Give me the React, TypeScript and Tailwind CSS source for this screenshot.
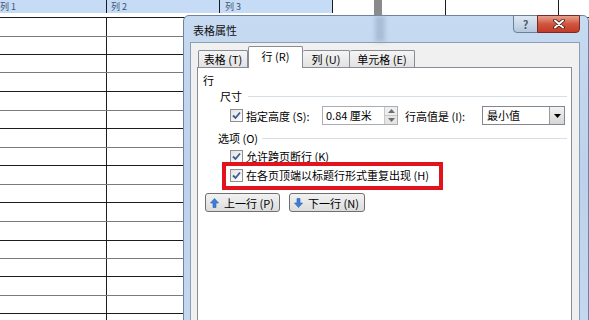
const font = { fontFamily: '"Noto Sans CJK SC", "Noto Sans", sans-serif' }

function Check() {
  return (
    <span className="flex h-[13px] w-[13px] shrink-0 items-center justify-center border border-[#8e8f8f] bg-gradient-to-br from-[#e2e2e2] to-white">
      <svg width="11" height="11" viewBox="0 0 11 11">
        <path d="M2 5.5 L4.5 8 L9 2.5" fill="none" stroke="#3b5a96" strokeWidth="1.8" />
      </svg>
    </span>
  )
}

function Arrow({ down }: { down?: boolean }) {
  return (
    <svg width="9" height="10" viewBox="0 0 9 10" className="shrink-0">
      <g transform={down ? 'rotate(180 4.5 5)' : undefined}>
        <path d="M4.5 0.5 L8.5 5 L6 5 L6 9.5 L3 9.5 L3 5 L0.5 5 Z" fill="#3d7fd8" stroke="#2a5fb0" strokeWidth="0.6" />
      </g>
    </svg>
  )
}

const rowHeights = [19, 18, 18, 19, 19, 18, 19, 18, 19, 18, 19, 19, 18, 18, 19, 18, 19]

function TableRow({ h, dark, header }: { h: number; dark: boolean; header?: boolean }) {
  const line = dark ? 'border-[#1c1c1c]' : 'border-[#7a7a7a]'
  const cell = header ? 'bg-[#c5dbf6]' : 'bg-white'
  return (
    <div className={`flex border-b ${line}`} style={{ height: h }}>
      <div className={`w-[107px] shrink-0 border-r border-[#1c1c1c] ${header ? 'h-[13px] ' + cell : ''}`}>
        {header && <span className="ml-0 block text-[9px] leading-[13px] text-[#3c5473]">列 1</span>}
      </div>
      <div className={`w-[113px] shrink-0 border-r border-[#1c1c1c] ${header ? 'h-[13px] ' + cell : ''}`}>
        {header && <span className="ml-[4px] block text-[9px] leading-[13px] text-[#3c5473]">列 2</span>}
      </div>
      <div className={`w-[113px] shrink-0 border-r border-[#1c1c1c] ${header ? 'h-[13px] ' + cell : ''}`}>
        {header && <span className="ml-[5px] block text-[9px] leading-[13px] text-[#3c5473]">列 3</span>}
      </div>
      <div className="w-[41px] shrink-0" />
      <div className="w-[8px] shrink-0 bg-[#8a8a8a]" />
      <div className="w-[64px] shrink-0 border-r border-[#1c1c1c]" />
      <div className="w-[113px] shrink-0 border-r border-[#1c1c1c]" />
      <div className="flex-1" />
    </div>
  )
}

export default function App() {
  return (
    <div className="relative h-[320px] w-[589px] overflow-hidden bg-white text-[11px] text-black" style={font}>
      {/* document table behind */}
      <div className="flex flex-col">
        <TableRow h={18} dark header />
        {rowHeights.map((h, i) => (
          <TableRow key={i} h={h} dark={i % 2 === 1} />
        ))}
      </div>

      {/* dialog */}
      <div className="absolute left-[183px] top-[15px] flex h-[320px] w-[406px] flex-col rounded-t-[6px] border border-[#6f839e] bg-gradient-to-b from-[#c6daf1] via-[#bcd2ec] to-[#c4d9f0] pl-[6px] pr-[8px]">
        <div className="relative flex h-[26px] shrink-0 items-start justify-between">
          <div className="absolute left-[185px] top-0 h-full w-[10px] bg-[#8da2bb] opacity-50 blur-[2px]" />
          <span className="relative pl-[3px] pt-[7px] leading-[14px] text-[#101010]">表格属性</span>
          <div className="relative -mt-px flex">
            <div className="flex h-[18px] w-[25px] items-center justify-center rounded-bl-[4px] border border-[#6d7f97] bg-gradient-to-b from-[#dfe9f5] to-[#b6c8de] text-[11px] font-bold leading-none text-[#4c5a6e]">
              ?
            </div>
            <div className="-ml-px flex h-[18px] w-[43px] items-center justify-center rounded-br-[4px] border border-[#7a2a22] bg-gradient-to-b from-[#e6a08f] via-[#d0553f] to-[#c23a26]">
              <svg width="12" height="10" viewBox="0 0 12 10">
                <path d="M2 1.5 L10 8.5 M10 1.5 L2 8.5" stroke="#3a1510" strokeWidth="3.6" strokeLinecap="round" />
                <path d="M2 1.5 L10 8.5 M10 1.5 L2 8.5" stroke="white" strokeWidth="2" strokeLinecap="round" />
              </svg>
            </div>
          </div>
        </div>

        <div className="flex flex-1 flex-col border border-[#8d9db3] bg-[#f0f0f0] pl-[6px] pr-[7px] pt-[3px]">
          {/* tabs */}
          <div className="relative z-10 flex h-[21px] items-end pl-px">
            <div className="flex h-[17px] w-[50px] items-center justify-center rounded-t-[2px] border border-b-0 border-[#898c95] bg-gradient-to-b from-[#f5f5f5] to-[#e2e2e2]">表格 (T)</div>
            <div className="-mb-px flex h-[22px] w-[55px] items-center justify-center rounded-t-[2px] border border-b-0 border-[#898c95] bg-white pb-[2px]">行 (R)</div>
            <div className="flex h-[17px] w-[47px] items-center justify-center rounded-t-[2px] border border-b-0 border-l-0 border-[#898c95] bg-gradient-to-b from-[#f5f5f5] to-[#e2e2e2]">列 (U)</div>
            <div className="flex h-[17px] w-[65px] items-center justify-center rounded-t-[2px] border border-b-0 border-l-0 border-[#898c95] bg-gradient-to-b from-[#f5f5f5] to-[#e2e2e2]">单元格 (E)</div>
          </div>

          <div className="flex flex-1 flex-col border border-[#898c95] bg-white pr-[4px] leading-[14px]">
            <div className="mt-[5px] pl-[5px]">行</div>

            <div className="mt-[2px] flex items-center pl-[22px]">
              <span>尺寸</span>
              <span className="ml-[6px] h-px flex-1 bg-[#d5dfe5]" />
            </div>

            <div className="mt-[3px] flex h-[19px] items-center pl-[32px]">
              <Check />
              <span className="ml-[3px] w-[74px] shrink-0 whitespace-nowrap">指定高度 (S):</span>
              <div className="ml-[2px] flex h-[19px] w-[76px] shrink-0 border border-[#abadb3] bg-white">
                <span className="flex-1 pl-[3px] leading-[17px]">0.84 厘米</span>
                <div className="flex w-[13px] flex-col border-l border-[#c7c7c7]">
                  <div className="flex flex-1 items-center justify-center bg-[#eeeeee]">
                    <svg width="7" height="4" viewBox="0 0 7 4"><path d="M0 4 L3.5 0 L7 4 Z" fill="#6d6d6d" /></svg>
                  </div>
                  <div className="flex flex-1 items-center justify-center border-t border-[#c7c7c7] bg-[#e6e6e6]">
                    <svg width="7" height="4" viewBox="0 0 7 4"><path d="M0 0 L3.5 4 L7 0 Z" fill="#6d6d6d" /></svg>
                  </div>
                </div>
              </div>
              <span className="ml-[7px] w-[77px] shrink-0 whitespace-nowrap">行高值是 (I):</span>
              <div className="flex h-[19px] w-[83px] shrink-0 border border-[#828790] bg-white">
                <span className="flex-1 pl-[4px] leading-[17px]">最小值</span>
                <div className="flex w-[15px] items-center justify-center border-l border-[#9a9a9a] bg-gradient-to-b from-[#f2f2f2] to-[#d6d6d6]">
                  <svg width="7" height="4" viewBox="0 0 7 4"><path d="M0 0 L3.5 4 L7 0 Z" fill="#000" /></svg>
                </div>
              </div>
            </div>

            <div className="mt-[6px] flex items-center pl-[20px]">
              <span>选项 (O)</span>
              <span className="ml-[4px] h-px flex-1 bg-[#d5dfe5]" />
            </div>

            <div className="mt-[4px] flex items-center gap-[3px] pl-[32px]">
              <Check />
              <span>允许跨页断行 (K)</span>
            </div>
            <div className="mt-[5px] flex items-center gap-[3px] pl-[32px]">
              <Check />
              <span>在各页顶端以标题行形式重复出现 (H)</span>
            </div>

            <div className="mt-[11px] flex gap-[9px] pl-[7px]">
              <button className="flex h-[19px] w-[75px] items-center gap-[5px] rounded-[3px] border border-[#707070] bg-gradient-to-b from-[#f2f2f2] to-[#dcdcdc] pl-[4px] leading-[14px]">
                <Arrow />
                <span>上一行 (P)</span>
              </button>
              <button className="flex h-[19px] w-[76px] items-center gap-[5px] rounded-[3px] border border-[#707070] bg-gradient-to-b from-[#f2f2f2] to-[#dcdcdc] pl-[4px] leading-[14px]">
                <Arrow down />
                <span>下一行 (N)</span>
              </button>
            </div>
          </div>
        </div>
      </div>

      {/* red annotation box */}
      <div className="absolute left-[222px] top-[162px] h-[28px] w-[221px] border-[4px] border-[#e1141e]" />
    </div>
  )
}
